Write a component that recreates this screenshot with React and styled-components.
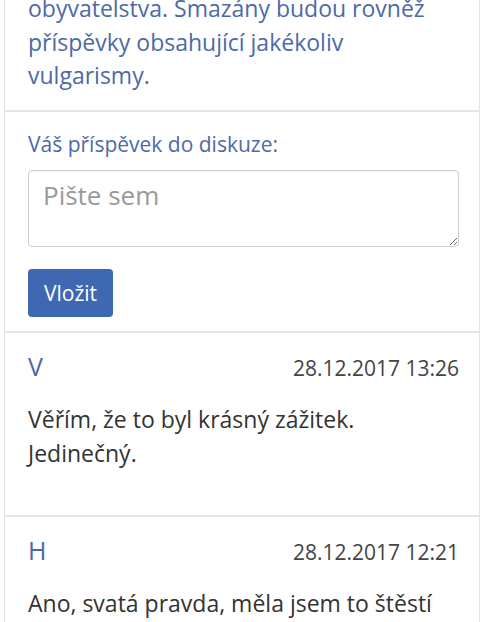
import React, { useState } from 'react';
import styled, { createGlobalStyle } from 'styled-components';

const GlobalStyle = createGlobalStyle`
  body {
    margin: 0;
    background: #fff;
    font-family: "Open Sans", "Noto Sans", sans-serif;
    overflow: hidden;
  }
`;

const comments = [
  {
    id: 1,
    author: 'V',
    date: '28.12.2017 13:26',
    text: 'Věřím, že to byl krásný zážitek. Jedinečný.',
    tail: 45,
  },
  {
    id: 2,
    author: 'H',
    date: '28.12.2017 12:21',
    text: 'Ano, svatá pravda, měla jsem to štěstí vidět to na vlastní oči.',
    tail: 17,
  },
];

const Discussion = () => {
  const [message, setMessage] = useState('');

  return (
    <Card>
      <Notice>
        obyvatelstva. Smazány budou rovněž příspěvky obsahující jakékoliv vulgarismy.
      </Notice>

      <Form onSubmit={(e) => e.preventDefault()}>
        <Label htmlFor="msg">Váš příspěvek do diskuze:</Label>
        <TextArea
          id="msg"
          placeholder="Pište sem"
          value={message}
          onChange={(e) => setMessage(e.target.value)}
        />
        <SubmitButton type="submit">Vložit</SubmitButton>
      </Form>

      {comments.map((c) => (
        <Comment key={c.id} $tail={c.tail}>
          <CommentHead>
            <Author>{c.author}</Author>
            <Date>{c.date}</Date>
          </CommentHead>
          <CommentText>{c.text}</CommentText>
        </Comment>
      ))}
    </Card>
  );
};

const App = () => (
  <>
    <GlobalStyle />
    <Discussion />
  </>
);

const Card = styled.div`
  margin: -8px 1px 0 4px;
  border-left: 1px solid #e2e2e2;
  border-right: 1px solid #e2e2e2;
  background: #fff;
`;

const Section = styled.div`
  padding: 0 20px 0 23px;
  border-bottom: 2px solid #e6e6e6;
`;

const Notice = styled(Section)`
  margin: 0;
  padding-bottom: 17px;
  font-size: 23px;
  line-height: 33.5px;
  color: #4d6aa6;
`;

const Form = styled(Section).attrs({ as: 'form' })`
  display: flex;
  flex-direction: column;
  align-items: flex-start;
  padding-top: 17px;
  padding-bottom: 14px;
`;

const Label = styled.label`
  font-size: 21px;
  line-height: 31.5px;
  color: #4d6aa6;
  margin-bottom: 10px;
`;

const TextArea = styled.textarea`
  box-sizing: border-box;
  width: 100%;
  height: 77px;
  padding: 5px 14px 2px;
  border: 1px solid #cfcfcf;
  border-radius: 4px;
  font-family: inherit;
  font-size: 26px;
  line-height: 39px;
  color: #333;
  box-shadow: inset 0 1px 1px rgba(0, 0, 0, 0.05);

  &::placeholder {
    color: #9a9a9a;
  }
`;

const SubmitButton = styled.button`
  margin-top: 22px;
  height: 48px;
  padding: 0 16px;
  border: none;
  border-radius: 4px;
  background: #3f68b3;
  color: #fff;
  font-family: inherit;
  font-size: 21px;
  cursor: pointer;

  &:hover {
    background: #35599b;
  }
`;

const Comment = styled(Section)`
  padding-top: 15px;
  padding-bottom: ${(p) => p.$tail}px;
`;

const CommentHead = styled.div`
  display: flex;
  justify-content: space-between;
  align-items: baseline;
  line-height: 36px;
  margin-bottom: 17px;
`;

const Author = styled.span`
  font-size: 25px;
  color: #4d6aa6;
`;

const Date = styled.span`
  font-size: 21px;
  color: #444;
`;

const CommentText = styled.p`
  margin: 0;
  font-size: 23px;
  line-height: 33.5px;
  color: #333;
`;

export default App;
